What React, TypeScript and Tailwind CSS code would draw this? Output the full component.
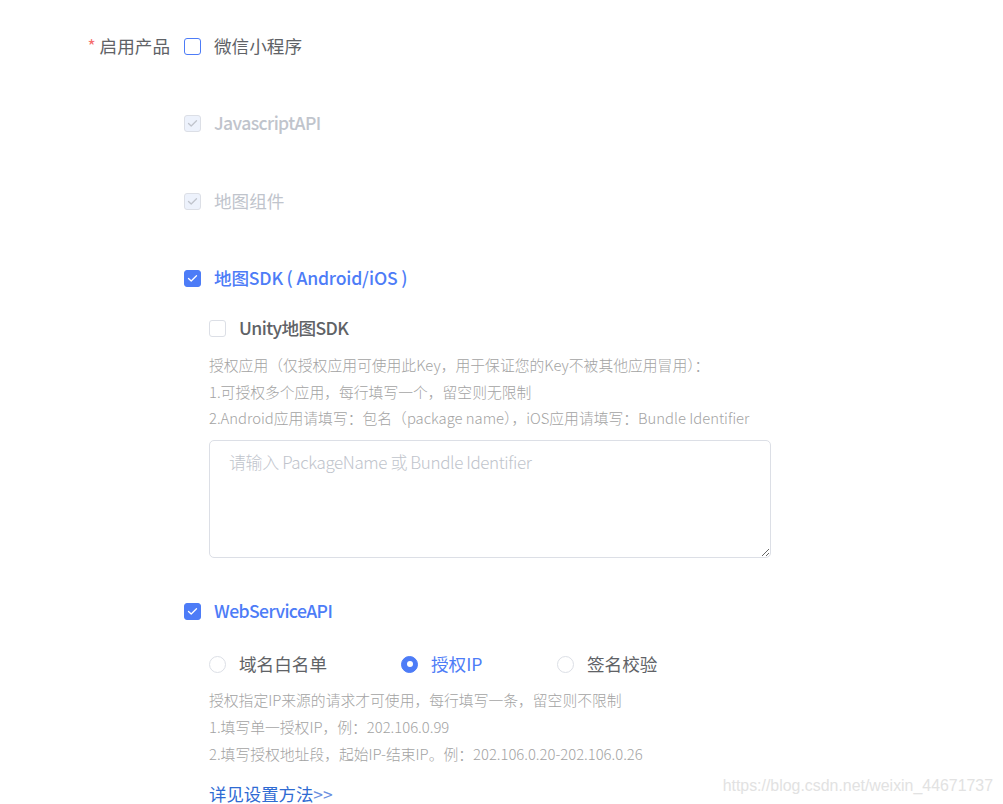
import React from 'react'

const font = { fontFamily: '"Noto Sans CJK SC", "Noto Sans", sans-serif' }

type BoxState = 'off' | 'hover' | 'disabled' | 'on'

function Check({ state }: { state: BoxState }) {
  const cls =
    state === 'on'
      ? 'bg-[#4d7cf7] border-[#4d7cf7]'
      : state === 'disabled'
        ? 'bg-[#edf2fc] border-[#dcdfe6]'
        : state === 'hover'
          ? 'bg-white border-[#4d7cf7]'
          : 'bg-white border-[#dcdfe6]'
  return (
    <span className={`w-[17px] h-[17px] rounded-[3px] border flex items-center justify-center shrink-0 ${cls}`}>
      {(state === 'on' || state === 'disabled') && (
        <svg width="11" height="9" viewBox="0 0 11 9" fill="none">
          <path
            d="M1.5 4.5 L4.2 7 L9.5 1.8"
            stroke={state === 'on' ? '#ffffff' : '#c0c4cc'}
            strokeWidth="1.3"
            strokeLinecap="round"
            strokeLinejoin="round"
          />
        </svg>
      )}
    </span>
  )
}

function CheckRow({
  state,
  label,
  bold,
  tight = 'tracking-[-0.6px]',
  className = '',
}: {
  state: BoxState
  label: string
  bold?: boolean
  tight?: string
  className?: string
}) {
  const color =
    state === 'on' ? 'text-[#4d7cf7]' : state === 'disabled' ? 'text-[#c0c4cc]' : 'text-[#606266]'
  return (
    <div className={`flex items-center h-[24px] ${className}`}>
      <Check state={state} />
      <span
        className={`ml-[13px] text-[17.6px] leading-[24px] whitespace-nowrap ${bold ? `font-medium ${tight}` : ''} ${color}`}
      >
        {label}
      </span>
    </div>
  )
}

function Radio({ on, label, width }: { on?: boolean; label: string; width: string }) {
  return (
    <div className={`flex items-center ${width}`}>
      <span
        className={`w-[17px] h-[17px] rounded-full border flex items-center justify-center shrink-0 ${
          on ? 'bg-[#4d7cf7] border-[#4d7cf7]' : 'bg-white border-[#dcdfe6]'
        }`}
      >
        {on && <span className="w-[6px] h-[6px] rounded-full bg-white" />}
      </span>
      <span className={`ml-[13px] text-[17.6px] leading-[24px] ${on ? 'text-[#4d7cf7]' : 'text-[#606266]'}`}>{label}</span>
    </div>
  )
}

function Hint({ lines, className = '' }: { lines: string[]; className?: string }) {
  return (
    <div className={`text-[14.8px] leading-[26.7px] font-light text-[#a3a3a3] ${className}`}>
      {lines.map((l) => (
        <div key={l} className="whitespace-nowrap">{l}</div>
      ))}
    </div>
  )
}

export default function App() {
  return (
    <div className="relative w-[1003px] h-[804px] bg-white overflow-hidden" style={font}>
      <div className="flex pt-[34px]">
        {/* Label column */}
        <div className="w-[184px] pr-[14px] flex justify-end items-start h-[24px]">
          <span className="text-[17.6px] leading-[24px] text-[#606266]">
            <span className="text-[#f56c6c] mr-[4px]">*</span>启用产品
          </span>
        </div>

        {/* Options */}
        <div className="flex flex-col">
          <CheckRow state="hover" label="微信小程序" />
          <CheckRow state="disabled" label="JavascriptAPI" bold className="mt-[53px]" />
          <CheckRow state="disabled" label="地图组件" className="mt-[54px]" />
          <CheckRow state="on" label="地图SDK ( Android/iOS )" bold tight="tracking-[-0.2px]" className="mt-[53px]" />

          <div className="pl-[25px] flex flex-col">
            <CheckRow state="off" label="Unity地图SDK" bold className="mt-[26px]" />
            <Hint
              className="mt-[12px]"
              lines={[
                '授权应用（仅授权应用可使用此Key，用于保证您的Key不被其他应用冒用）：',
                '1.可授权多个应用，每行填写一个，留空则无限制',
                '2.Android应用请填写：包名（package name），iOS应用请填写：Bundle Identifier',
              ]}
            />
            <textarea
              className="mt-[8px] w-[562px] h-[118px] rounded-[5px] border border-[#dcdfe6] px-[19px] py-[8px] text-[17px] leading-[26px] tracking-[-0.4px] font-light text-[#606266] placeholder:text-[#c0c4cc] outline-none resize-y"
              style={font}
              placeholder="请输入 PackageName 或 Bundle Identifier"
            />
          </div>

          <CheckRow state="on" label="WebServiceAPI" bold className="mt-[41px]" />

          <div className="pl-[25px] flex flex-col">
            <div className="flex items-center h-[24px] mt-[29px]">
              <Radio label="域名白名单" width="w-[192px]" />
              <Radio on label="授权IP" width="w-[156px]" />
              <Radio label="签名校验" width="w-[120px]" />
            </div>
            <Hint
              className="mt-[11px]"
              lines={[
                '授权指定IP来源的请求才可使用，每行填写一条，留空则不限制',
                '1.填写单一授权IP，例：202.106.0.99',
                '2.填写授权地址段，起始IP-结束IP。例：202.106.0.20-202.106.0.26',
              ]}
            />
            <div className="mt-[15px] h-[24px] text-[17.4px] leading-[24px] text-[#2f6bd3]">
              详见设置方法<span className="text-[#6b8fe0]">&gt;&gt;</span>
            </div>
          </div>
        </div>
      </div>

      {/* watermark */}
      <div
        className="absolute right-[10px] top-[776px] text-[15.9px] leading-[20px] text-[#e2e2e2]"
        style={{ fontFamily: '"Liberation Sans", Arial, sans-serif' }}
      >
        https://blog.csdn.net/weixin_44671737
      </div>
    </div>
  )
}
